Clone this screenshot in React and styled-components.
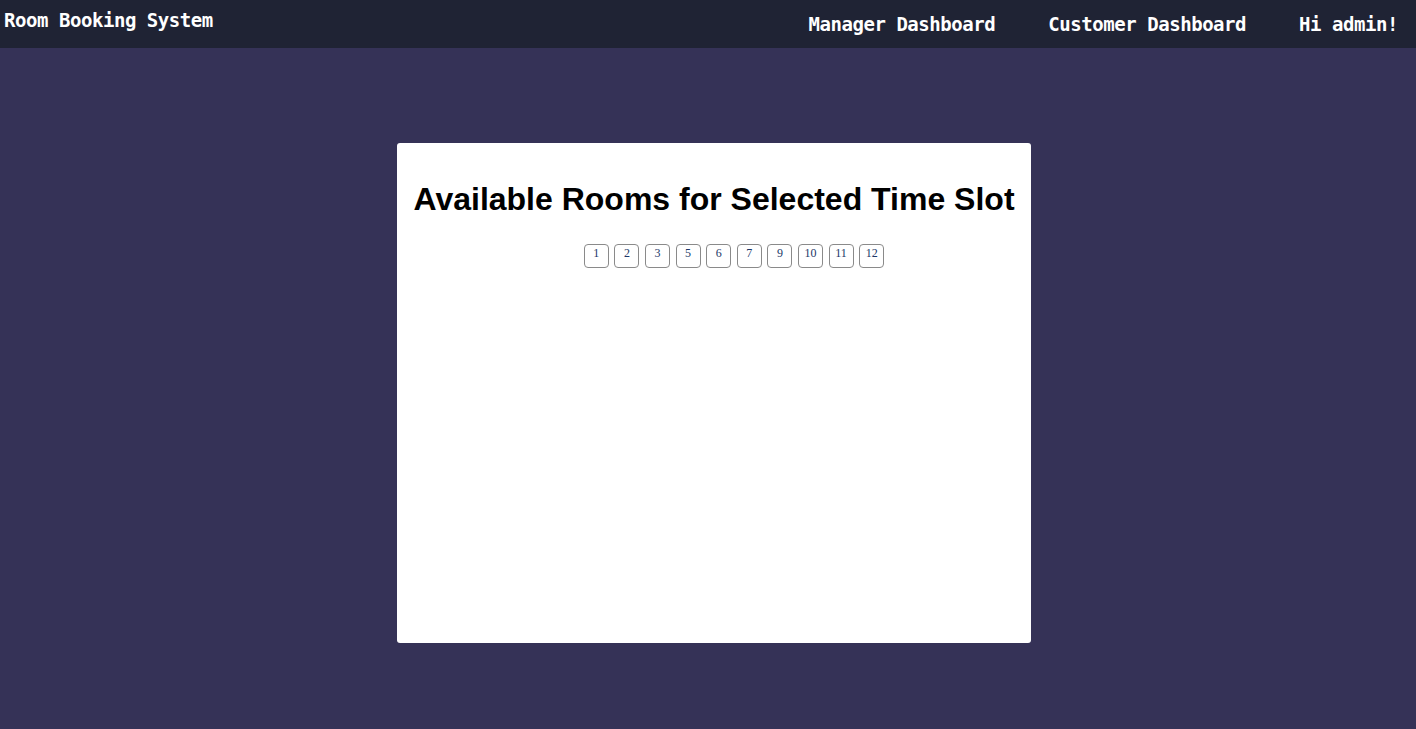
import React from 'react'
import styled, { createGlobalStyle } from 'styled-components'

const GlobalStyle = createGlobalStyle`
  html, body {
    margin: 0;
    padding: 0;
    background: #353257;
  }
`

const rooms = [1, 2, 3, 5, 6, 7, 9, 10, 11, 12]

const App = () => {
  return (
    <>
      <GlobalStyle />
      <Page>
        <Navbar>
          <Brand>Room Booking System</Brand>
          <NavLinks>
            <NavItem>Manager Dashboard</NavItem>
            <NavItem>Customer Dashboard</NavItem>
            <NavItem>Hi admin!</NavItem>
          </NavLinks>
        </Navbar>
        <Main>
          <Card>
            <Title>Available Rooms for Selected Time Slot</Title>
            <RoomList>
              {rooms.map((r) => (
                <RoomButton key={r}>{r}</RoomButton>
              ))}
            </RoomList>
          </Card>
        </Main>
      </Page>
    </>
  )
}

export default App

const Page = styled.div`
  min-height: 729px;
  background: #353257;
`

const Navbar = styled.nav`
  height: 48px;
  background: #1f2334;
  display: flex;
  justify-content: space-between;
  align-items: flex-start;
  font-family: "DejaVu Sans Mono", "Liberation Mono", monospace;
  font-weight: bold;
  color: #fff;
`

const Brand = styled.div`
  font-size: 19px;
  letter-spacing: -0.45px;
  padding: 9px 0 0 4px;
`

const NavLinks = styled.ul`
  display: flex;
  gap: 53px;
  list-style: none;
  margin: 0;
  padding: 13px 18px 0 0;
`

const NavItem = styled.li`
  font-size: 19px;
  letter-spacing: -0.45px;
`

const Main = styled.main`
  display: flex;
  justify-content: center;
  padding: 95px 0 0 12px;
`

const Card = styled.section`
  width: 634px;
  height: 500px;
  box-sizing: border-box;
  background: #fff;
  border-radius: 3px;
  padding: 0 16px;
`

const Title = styled.h1`
  font-family: "Liberation Sans", Arial, sans-serif;
  font-size: 32px;
  font-weight: bold;
  text-align: center;
  margin: 38px 0 26px;
  color: #000;
  white-space: nowrap;
`

const RoomList = styled.ul`
  display: flex;
  justify-content: center;
  gap: 5.6px;
  list-style: none;
  margin: 0;
  padding: 0 0 0 40px;
`

const RoomButton = styled.button`
  width: 25px;
  height: 24px;
  box-sizing: border-box;
  padding: 1px 0 0;
  display: flex;
  justify-content: center;
  align-items: flex-start;
  background: #fff;
  border: 1px solid #8a8a8a;
  border-radius: 4px;
  font-family: "Liberation Serif", "Times New Roman", serif;
  font-size: 12px;
  color: #1c3768;
`
